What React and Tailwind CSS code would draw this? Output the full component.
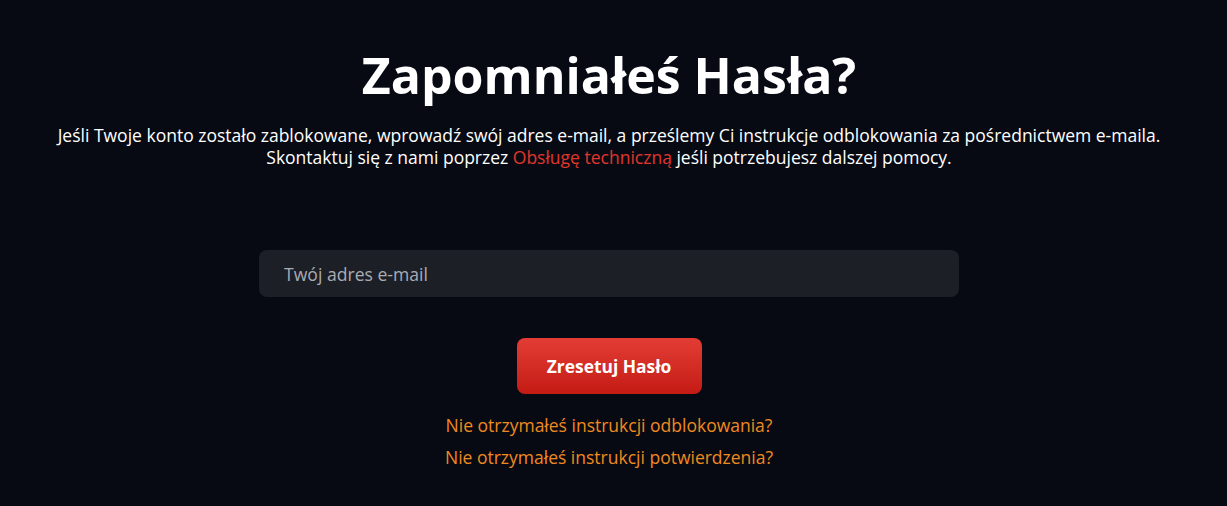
import React from 'react';

export default function App() {
  return (
    <div
      className="min-h-[506px] w-full bg-[#070a13] text-white flex flex-col items-center pr-[9px]"
      style={{ fontFamily: '"Open Sans", "Noto Sans", sans-serif' }}
    >
      <h1 className="mt-[41px] text-[50px] leading-[68px] font-bold">Zapomniałeś Hasła?</h1>
      <p className="mt-[15px] text-[17.5px] leading-[22px] text-center">
        Jeśli Twoje konto zostało zablokowane, wprowadź swój adres e-mail, a prześlemy Ci instrukcje odblokowania za pośrednictwem e-maila.
        <br />
        Skontaktuj się z nami poprzez <a className="text-[#e0362c]">Obsługę techniczną</a> jeśli potrzebujesz dalszej pomocy.
      </p>
      <form className="mt-[82px] flex flex-col items-center" onSubmit={(e) => e.preventDefault()}>
        <input
          type="email"
          placeholder="Twój adres e-mail"
          className="block w-[700px] h-[47px] rounded-[8px] bg-[#1d1f27] px-[25px] text-[17.6px] text-white placeholder:text-[#a9acb3] outline-none"
        />
        <button
          type="submit"
          className="mt-[41px] w-[185px] h-[56px] rounded-[8px] bg-gradient-to-b from-[#e23c34] to-[#c41a14] text-[17.4px] font-bold"
        >
          Zresetuj Hasło
        </button>
      </form>
      <div className="mt-[20px] flex flex-col items-center gap-[10px] text-[17.5px] leading-[22px] text-[#f0891f]">
        <a>Nie otrzymałeś instrukcji odblokowania?</a>
        <a>Nie otrzymałeś instrukcji potwierdzenia?</a>
      </div>
    </div>
  );
}
